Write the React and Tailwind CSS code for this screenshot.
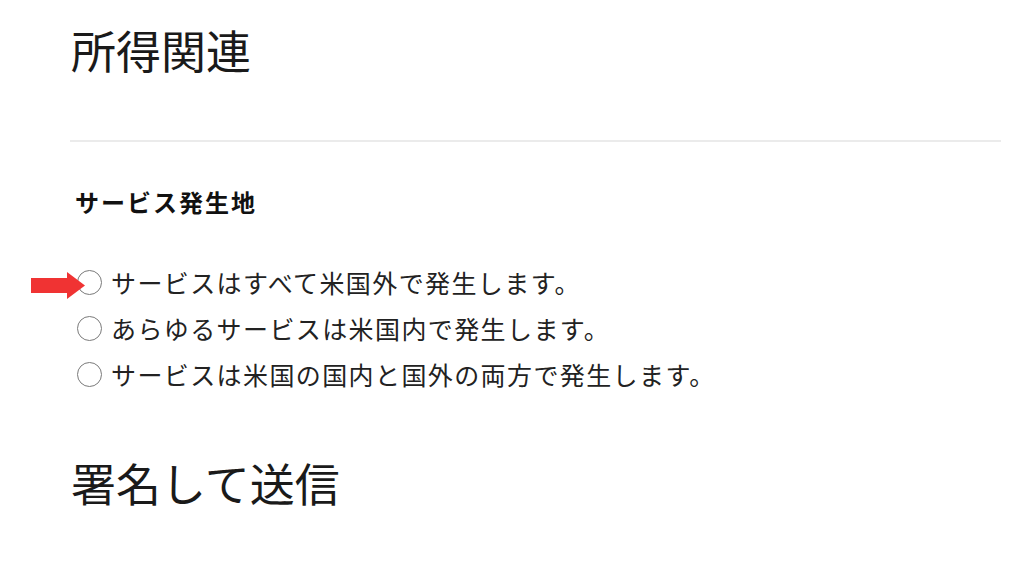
import React from "react";

const font = { fontFamily: '"Noto Sans CJK JP", "Noto Sans", sans-serif' };

function Radio({ children }) {
  return (
    <label className="flex items-center h-[46px]">
      <span className="w-[25px] h-[25px] rounded-full border-[1.5px] border-[#7a7a7a] bg-white shrink-0" />
      <span className="ml-[9px] text-[25px] leading-none tracking-[1.4px] text-[#222]">{children}</span>
    </label>
  );
}

export default function App() {
  return (
    <div className="relative w-[1024px] h-[576px] bg-white overflow-hidden" style={font}>
      <div className="pl-[70px] pr-[23px] pt-[24px]">
        <h1 className="text-[45px] leading-[52px] font-normal text-[#1a1a1a] pl-[1px]">所得関連</h1>
        <div className="mt-[64px] h-[2px] bg-[#ebebeb]" />
        <h2 className="mt-[45px] pl-[5px] text-[24px] leading-[30px] font-bold tracking-[2px] text-[#111]">サービス発生地</h2>
        <div className="mt-[42px] pl-[7px] flex flex-col">
          <Radio>サービスはすべて米国外で発生します。</Radio>
          <Radio>あらゆるサービスは米国内で発生します。</Radio>
          <Radio>サービスは米国の国内と国外の両方で発生します。</Radio>
        </div>
        <h1 className="mt-[60px] text-[45px] leading-[52px] font-normal text-[#1a1a1a] pl-[1px]">署名して送信</h1>
      </div>
      <svg className="absolute left-[31px] top-[272px]" width="56" height="27" viewBox="0 0 56 27">
        <polygon points="0,6 36,6 36,0 54,13.5 36,27 36,21 0,21" fill="#f03333" />
      </svg>
    </div>
  );
}
